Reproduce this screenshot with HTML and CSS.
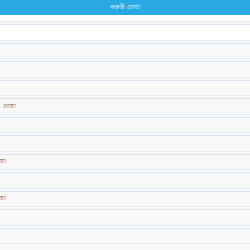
FILE: index.html
```html
<!DOCTYPE html>
<html lang="bn">
<head>
    <meta charset="UTF-8">
    <meta name="viewport" content="width=device-width, initial-scale=1.0">
    <title>জরুরী দোয়া</title>
    <link rel="stylesheet" href="styles.css">
</head>
<body>
    <div class="header">জরুরী দোয়া</div>
    <ul class="list">
        <li class="item first"></li>
        <li class="item light"></li>
        <li class="item"></li>
        <li class="item"></li>
        <li class="item"></li>
        <li class="item"><span class="title t1">দোয়া</span></li>
        <li class="item"></li>
        <li class="item"></li>
        <li class="item"><span class="title">য়া</span></li>
        <li class="item"></li>
        <li class="item"><span class="title">য়া</span></li>
        <li class="item"></li>
        <li class="item"></li>
    </ul>
</body>
</html>
```

FILE: styles.css
```css
body {
    margin: 0;
    font-family: "Noto Sans", "DejaVu Sans", sans-serif;
    background-color: #f8f8f8;
    overflow: hidden;
}
.header {
    height: 15px;
    line-height: 15px;
    background-color: #29a9e1;
    color: white;
    font-size: 6px;
    text-align: center;
}
.list {
    list-style: none;
    margin: 0;
    padding: 0;
}
.item {
    box-sizing: border-box;
    height: 16.5px;
    margin-bottom: 2px;
    border-top: 1px solid #d7e5f4;
    border-bottom: 1px solid #e6ebf1;
    background-color: #f8f8f8;
    display: flex;
    align-items: center;
    font-size: 6px;
    color: #444;
}
.item.first {
    height: 7px;
    background-color: white;
    border-top: none;
}
.item.light {
    background-color: white;
}
.title {
    white-space: nowrap;
}
.t1 {
    margin-left: 3px;
}
```
